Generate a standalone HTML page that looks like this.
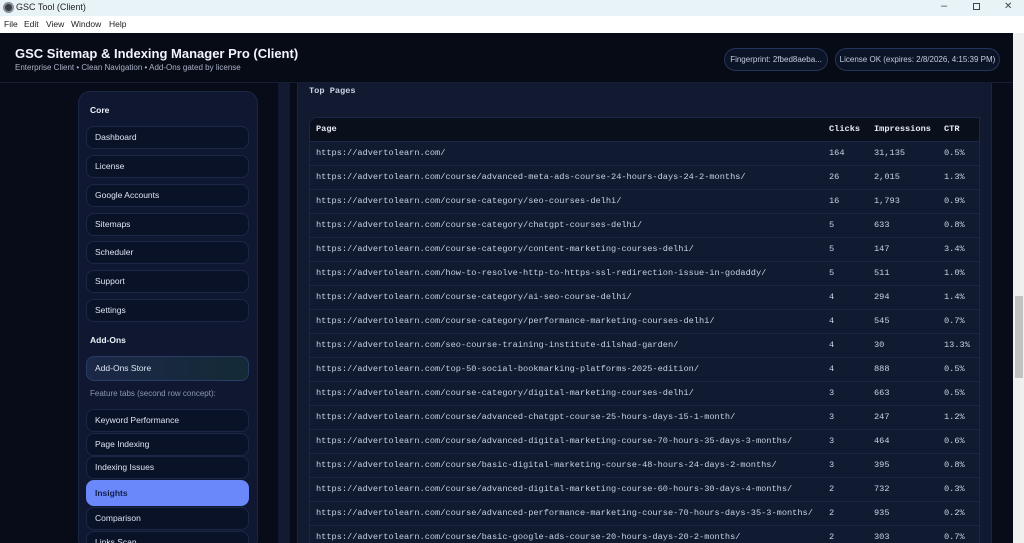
<!DOCTYPE html>
<html><head><meta charset="utf-8"><style>
*{margin:0;padding:0;box-sizing:border-box}
html,body{width:1024px;height:543px;overflow:hidden}
body{background:#080c18;font-family:"Liberation Sans",sans-serif;position:relative}
.abs{position:absolute}
.title{left:0;top:0;width:1024px;height:16px;background:#e8f3f7;font-size:9px;color:#222}
.menu{left:0;top:16px;width:1024px;height:17px;background:#fff;font-size:8.5px;color:#222}
.hdr{left:0;top:33px;width:1013px;height:50px;background:#070b16;border-bottom:1px solid #141d33}
.pill{top:48px;height:23px;border:1px solid #25345a;border-radius:12px;background:#0c1428;color:#c4cde0;font-size:8px;line-height:21px;text-align:center;white-space:nowrap}
.side{left:78px;top:91px;width:180px;height:460px;background:#0f1830;border:1px solid #1b2645;border-radius:12px}
.item{position:absolute;left:86px;width:163px;height:23px;border:1px solid #1b2747;border-radius:8px;background:#0a1228;color:#dde4f2;font-size:8.5px;line-height:21px;padding-left:8px}
.sec{position:absolute;left:90px;font-size:8.5px;font-weight:bold;color:#eef2fa}
.main{left:297px;top:83px;width:695px;height:460px;background:#111a31;border-left:1px solid #1a2542;border-right:1px solid #1a2542}
.tbl{left:309px;top:117px;width:671px;height:426px;border:1px solid #1b2747;border-bottom:none;border-radius:8px 0 0 0;overflow:hidden;background:#101a30}
.row{position:absolute;left:0;width:671px;height:24px;border-bottom:1px solid #1b2645;font-family:"Liberation Mono",monospace;font-size:8.65px;color:#c9d1e2;line-height:23px}
.row span{position:absolute;top:0}
.h{background:#0a0f1c;font-weight:bold;color:#e6eaf3}
</style></head><body>
<div class="abs title"><div class="abs" style="left:3px;top:2px;width:11px;height:11px;border-radius:50%;background:#3a3f47;border:2px solid #8a9099"></div><span class="abs" style="left:16px;top:2px">GSC Tool (Client)</span>
<span class="abs" style="left:941px;top:0px;font-size:11px;color:#444">–</span><span class="abs" style="left:973px;top:3px;width:7px;height:7px;border:1px solid #444"></span><span class="abs" style="left:1004px;top:1px;font-size:10px;color:#444">✕</span></div>
<div class="abs menu"><span class="abs" style="left:4px;top:3px">File</span><span class="abs" style="left:24px;top:3px">Edit</span><span class="abs" style="left:46px;top:3px">View</span><span class="abs" style="left:71px;top:3px">Window</span><span class="abs" style="left:109px;top:3px">Help</span></div>
<div class="abs hdr"><div class="abs" style="left:15px;top:13px;font-size:13px;font-weight:bold;color:#f2f5fb">GSC Sitemap &amp; Indexing Manager Pro (Client)</div><div class="abs" style="left:15px;top:30px;font-size:8px;color:#a8b2c6">Enterprise Client • Clean Navigation • Add-Ons gated by license</div></div>
<div class="abs pill" style="left:724px;width:104px">Fingerprint: 2fbed8aeba...</div>
<div class="abs pill" style="left:835px;width:165px">License OK (expires: 2/8/2026, 4:15:39 PM)</div>
<div class="abs" style="left:1013px;top:33px;width:11px;height:510px;background:#f0f0f0"></div>
<div class="abs" style="left:1015px;top:296px;width:8px;height:82px;background:#c2c2c2"></div>
<div class="abs" style="left:278px;top:83px;width:12px;height:460px;background:#111a30"></div>
<div class="abs side"></div>
<div class="sec" style="top:105px">Core</div>
<div class="item" style="top:126px">Dashboard</div>
<div class="item" style="top:155px">License</div>
<div class="item" style="top:184px">Google Accounts</div>
<div class="item" style="top:213px">Sitemaps</div>
<div class="item" style="top:241px">Scheduler</div>
<div class="item" style="top:270px">Support</div>
<div class="item" style="top:299px">Settings</div>
<div class="sec" style="top:335px">Add-Ons</div>
<div class="item" style="top:356px;height:25px;line-height:23px;background:linear-gradient(90deg,#1b2848,#142a36);border-color:#2a3c66">Add-Ons Store</div>
<div class="abs" style="left:90px;top:389px;font-size:8px;color:#8c97ad">Feature tabs (second row concept):</div>
<div class="item" style="top:409px">Keyword Performance</div>
<div class="item" style="top:433px">Page Indexing</div>
<div class="item" style="top:456px">Indexing Issues</div>
<div class="item" style="top:480px;height:26px;line-height:24px;background:#6b88fb;border-color:#6b88fb;color:#10204a;font-weight:bold">Insights</div>
<div class="item" style="top:507px">Comparison</div>
<div class="item" style="top:531px">Links Scan</div>
<div class="abs main"></div>
<div class="abs" style="left:309px;top:86px;font-family:'Liberation Mono',monospace;font-size:8.65px;font-weight:bold;color:#c9d1e2">Top Pages</div>
<div class="abs tbl">
<div class="row h" style="top:0"><span style="left:6px">Page</span><span style="left:519px">Clicks</span><span style="left:564px">Impressions</span><span style="left:634px">CTR</span></div>
<div class="row" style="top:24px"><span style="left:6px">https://advertolearn.com/</span><span style="left:519px">164</span><span style="left:564px">31,135</span><span style="left:634px">0.5%</span></div>
<div class="row" style="top:48px"><span style="left:6px">https://advertolearn.com/course/advanced-meta-ads-course-24-hours-days-24-2-months/</span><span style="left:519px">26</span><span style="left:564px">2,015</span><span style="left:634px">1.3%</span></div>
<div class="row" style="top:72px"><span style="left:6px">https://advertolearn.com/course-category/seo-courses-delhi/</span><span style="left:519px">16</span><span style="left:564px">1,793</span><span style="left:634px">0.9%</span></div>
<div class="row" style="top:96px"><span style="left:6px">https://advertolearn.com/course-category/chatgpt-courses-delhi/</span><span style="left:519px">5</span><span style="left:564px">633</span><span style="left:634px">0.8%</span></div>
<div class="row" style="top:120px"><span style="left:6px">https://advertolearn.com/course-category/content-marketing-courses-delhi/</span><span style="left:519px">5</span><span style="left:564px">147</span><span style="left:634px">3.4%</span></div>
<div class="row" style="top:144px"><span style="left:6px">https://advertolearn.com/how-to-resolve-http-to-https-ssl-redirection-issue-in-godaddy/</span><span style="left:519px">5</span><span style="left:564px">511</span><span style="left:634px">1.0%</span></div>
<div class="row" style="top:168px"><span style="left:6px">https://advertolearn.com/course-category/ai-seo-course-delhi/</span><span style="left:519px">4</span><span style="left:564px">294</span><span style="left:634px">1.4%</span></div>
<div class="row" style="top:192px"><span style="left:6px">https://advertolearn.com/course-category/performance-marketing-courses-delhi/</span><span style="left:519px">4</span><span style="left:564px">545</span><span style="left:634px">0.7%</span></div>
<div class="row" style="top:216px"><span style="left:6px">https://advertolearn.com/seo-course-training-institute-dilshad-garden/</span><span style="left:519px">4</span><span style="left:564px">30</span><span style="left:634px">13.3%</span></div>
<div class="row" style="top:240px"><span style="left:6px">https://advertolearn.com/top-50-social-bookmarking-platforms-2025-edition/</span><span style="left:519px">4</span><span style="left:564px">888</span><span style="left:634px">0.5%</span></div>
<div class="row" style="top:264px"><span style="left:6px">https://advertolearn.com/course-category/digital-marketing-courses-delhi/</span><span style="left:519px">3</span><span style="left:564px">663</span><span style="left:634px">0.5%</span></div>
<div class="row" style="top:288px"><span style="left:6px">https://advertolearn.com/course/advanced-chatgpt-course-25-hours-days-15-1-month/</span><span style="left:519px">3</span><span style="left:564px">247</span><span style="left:634px">1.2%</span></div>
<div class="row" style="top:312px"><span style="left:6px">https://advertolearn.com/course/advanced-digital-marketing-course-70-hours-35-days-3-months/</span><span style="left:519px">3</span><span style="left:564px">464</span><span style="left:634px">0.6%</span></div>
<div class="row" style="top:336px"><span style="left:6px">https://advertolearn.com/course/basic-digital-marketing-course-48-hours-24-days-2-months/</span><span style="left:519px">3</span><span style="left:564px">395</span><span style="left:634px">0.8%</span></div>
<div class="row" style="top:360px"><span style="left:6px">https://advertolearn.com/course/advanced-digital-marketing-course-60-hours-30-days-4-months/</span><span style="left:519px">2</span><span style="left:564px">732</span><span style="left:634px">0.3%</span></div>
<div class="row" style="top:384px"><span style="left:6px">https://advertolearn.com/course/advanced-performance-marketing-course-70-hours-days-35-3-months/</span><span style="left:519px">2</span><span style="left:564px">935</span><span style="left:634px">0.2%</span></div>
<div class="row" style="top:408px"><span style="left:6px">https://advertolearn.com/course/basic-google-ads-course-20-hours-days-20-2-months/</span><span style="left:519px">2</span><span style="left:564px">303</span><span style="left:634px">0.7%</span></div>
</div>
</body></html>
